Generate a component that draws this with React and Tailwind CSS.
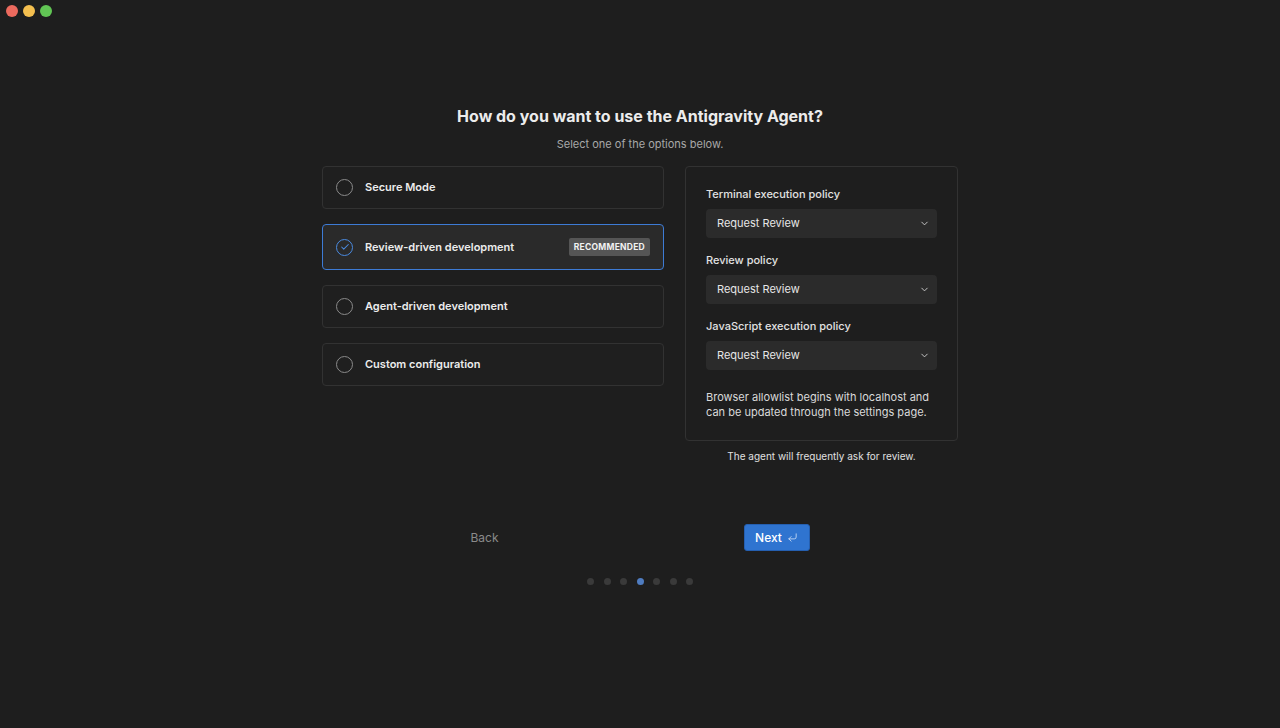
import { CornerDownLeft, ChevronDown, Check } from 'lucide-react';

const options = [
  { id: 'secure', label: 'Secure Mode' },
  { id: 'review', label: 'Review-driven development', recommended: true },
  { id: 'agent', label: 'Agent-driven development' },
  { id: 'custom', label: 'Custom configuration' },
];

const policies = [
  'Terminal execution policy',
  'Review policy',
  'JavaScript execution policy',
];

const OptionCard = ({ option, selected }) => (
  <div
    className={`flex items-center rounded-[4px] border pl-[13px] pr-[13px] ${
      selected
        ? 'h-[46px] border-[#3d7bd5] bg-[#2a2a2a]'
        : 'h-[43px] border-[#323232] bg-[#1f1f1f]'
    }`}
  >
    {selected ? (
      <div className="flex h-[17px] w-[17px] items-center justify-center rounded-full border-[1.5px] border-[#4a8ae0]">
        <Check className="h-[10px] w-[10px] text-[#4a8ae0]" strokeWidth={2.5} />
      </div>
    ) : (
      <div className="h-[17px] w-[17px] rounded-full border-[1.5px] border-[#8a8a8a]" />
    )}
    <span className="ml-[12px] text-[11px] font-semibold text-[#ececec]">{option.label}</span>
    {option.recommended && (
      <span className="ml-auto flex h-[18px] items-center rounded-[2px] bg-[#555555] px-[5px] text-[8.5px] font-bold tracking-[0.03em] text-[#f2f2f2]">
        RECOMMENDED
      </span>
    )}
  </div>
);

const PolicySelect = ({ label, first }) => (
  <div className={first ? '' : 'mt-[14px]'}>
    <div className="text-[11px] font-medium leading-[16px] text-[#e2e2e2]">{label}</div>
    <div className="mt-[7px] flex h-[29px] items-center justify-between rounded-[4px] bg-[#2b2b2b] pl-[11px] pr-[7px]">
      <span className="text-[11px] text-[#e6e6e6]">Request Review</span>
      <ChevronDown className="h-[11px] w-[11px] text-[#cfcfcf]" strokeWidth={2} />
    </div>
  </div>
);

export default function App() {
  return (
    <div
      className="h-[728px] w-full overflow-hidden bg-[#1e1e1e]"
      style={{ fontFamily: 'Inter, "Noto Sans", "Liberation Sans", sans-serif' }}
    >
      {/* window chrome */}
      <div className="flex h-[22px] items-center gap-[5px] pl-[6px]">
        <div className="h-[12px] w-[12px] rounded-full bg-[#ec6a5e]" />
        <div className="h-[12px] w-[12px] rounded-full bg-[#f4bf4f]" />
        <div className="h-[12px] w-[12px] rounded-full bg-[#61c554]" />
      </div>

      <div className="flex flex-col items-center pt-[82px]">
        <h1 className="text-[16px] font-bold leading-[24px] text-[#ececec]">
          How do you want to use the Antigravity Agent?
        </h1>
        <p className="mt-[8px] text-[11px] leading-[16px] text-[#a8a8a8]">
          Select one of the options below.
        </p>

        <div className="mt-[14px] flex gap-[21px]">
          {/* options */}
          <div className="flex w-[342px] flex-col gap-[15px]">
            {options.map((o) => (
              <OptionCard key={o.id} option={o} selected={o.id === 'review'} />
            ))}
          </div>

          {/* settings */}
          <div className="flex w-[273px] flex-col">
            <div className="rounded-[4px] border border-[#323232] bg-[#1e1e1e] px-[20px] pb-[20px] pt-[19px]">
              {policies.map((p, i) => (
                <PolicySelect key={p} label={p} first={i === 0} />
              ))}
              <p className="mt-[20px] text-[11px] leading-[15px] text-[#dadada]">
                Browser allowlist begins with localhost and can be updated through the settings page.
              </p>
            </div>
            <p className="mt-[8px] text-center text-[10px] text-[#e0e0e0]">
              The agent will frequently ask for review.
            </p>
          </div>
        </div>

        <div className="mt-[60px] flex w-[339px] items-center justify-between">
          <button className="text-[12px] text-[#8a8a8a]">Back</button>
          <button className="flex h-[27px] w-[66px] items-center justify-center gap-[5px] rounded-[3px] border border-[#255fb0] bg-[#2f74d0] text-[12px] font-medium text-white">
            Next
            <CornerDownLeft className="h-[11px] w-[11px] text-[#d6e4f7]" strokeWidth={1.75} />
          </button>
        </div>

        <div className="mt-[27px] flex gap-[9.5px]">
          {[0, 1, 2, 3, 4, 5, 6].map((i) => (
            <div
              key={i}
              className={`h-[7px] w-[7px] rounded-full ${i === 3 ? 'bg-[#4f7cc0]' : 'bg-[#3a3a3a]'}`}
            />
          ))}
        </div>
      </div>
    </div>
  );
}
